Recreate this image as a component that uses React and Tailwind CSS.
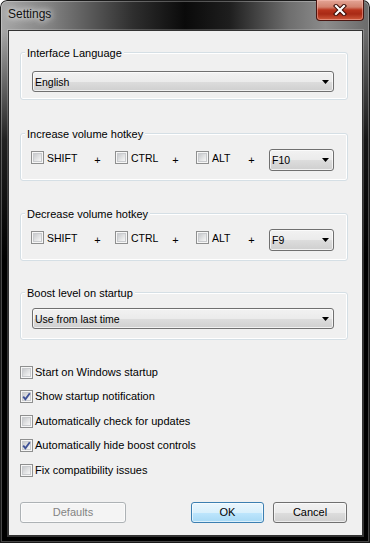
import React from "react";

function Checkbox({ checked }) {
  return (
    <div className="relative w-[13px] h-[13px] shrink-0 border border-[#8e8f8f] bg-[#f6f6f6] p-[1px]">
      <div className="w-full h-full border border-[#c9cbce] [background-image:linear-gradient(135deg,#c8cacd_0%,#e2e3e4_55%,#f6f6f6_100%)]" />
      {checked && (
        <svg className="absolute left-[1px] top-[1px]" width="9" height="9" viewBox="0 0 9 9">
          <path d="M1.2 4.6 L3.4 7.2 L7.8 1.2" fill="none" stroke="#3e5196" strokeWidth="1.9" strokeLinejoin="miter" />
        </svg>
      )}
    </div>
  );
}

function Arrow() {
  return (
    <svg width="7" height="4" viewBox="0 0 7 4" className="shrink-0">
      <path d="M0 0 H7 L3.5 4 Z" fill="#000" />
    </svg>
  );
}

function Combo({ text, className }) {
  return (
    <div
      className={`flex items-center justify-between pl-[2px] pr-[4px] border border-[#707070] rounded-[3px] shadow-[inset_0_0_0_1px_rgba(255,255,255,0.7)] [background-image:linear-gradient(180deg,#f2f2f2_0%,#ebebeb_50%,#dddddd_51%,#cfcfcf_100%)] ${className}`}
    >
      <span className="text-[10.5px] leading-[12px] text-black">{text}</span>
      <Arrow />
    </div>
  );
}

function Group({ label, className, children }) {
  return (
    <div
      className={`relative w-[328px] h-[48px] border border-[#d5dfe5] rounded-[3px] shadow-[inset_0_0_0_1px_#ffffff] ${className}`}
    >
      <span className="absolute left-[4px] top-[-7px] px-[2px] bg-[#f0f0f0] text-[11px] leading-[14px] text-black whitespace-nowrap">
        {label}
      </span>
      {children}
    </div>
  );
}

function KeyBox({ label, className }) {
  return (
    <div className={`flex items-center gap-[3px] h-[13px] mt-[2px] ${className}`}>
      <Checkbox />
      <span className="text-[10.5px] leading-[12px] text-black">{label}</span>
    </div>
  );
}

function Plus() {
  return (
    <div className="w-[13px] h-[22px] flex items-center justify-center text-[11px] text-black pt-[1px]">+</div>
  );
}

function HotkeyRow({ fkey }) {
  return (
    <div className="flex items-start pt-[15px] pl-[10px]">
      <KeyBox label="SHIFT" className="w-[60px]" />
      <Plus />
      <KeyBox label="CTRL" className="w-[54px] ml-[11px]" />
      <Plus />
      <KeyBox label="ALT" className="w-[49px] ml-[14px]" />
      <Plus />
      <Combo text={fkey} className="w-[65px] h-[22px] ml-[11px]" />
    </div>
  );
}

function Option({ label, checked, className }) {
  return (
    <div className={`flex items-center gap-[2px] h-[13px] ${className}`}>
      <Checkbox checked={checked} />
      <span className="text-[11px] leading-[13px] text-black whitespace-nowrap">{label}</span>
    </div>
  );
}

function Button({ children, variant, className }) {
  let style =
    "border-[#707070] text-black [background-image:linear-gradient(180deg,#f2f2f2_0%,#ebebeb_50%,#dddddd_51%,#cfcfcf_100%)]";
  if (variant === "default")
    style =
      "border-[#3c7fb1] text-black [background-image:linear-gradient(180deg,#eaf6fd_0%,#d9f0fc_50%,#bee6fd_51%,#a7d9f5_100%)]";
  if (variant === "disabled")
    style = "border-[#adb2b5] text-[#838383] bg-[#f4f4f4]";
  return (
    <div
      className={`h-[21px] flex items-center justify-center border rounded-[3px] shadow-[inset_0_0_0_1px_rgba(255,255,255,0.6)] text-[11px] ${style} ${className}`}
    >
      {children}
    </div>
  );
}

export default function App() {
  return (
    <div className="w-[370px] h-[543px] bg-white font-['Liberation_Sans',Arial,sans-serif]">
      <div className="w-full h-full rounded-t-[7px] flex flex-col shadow-[inset_0_0_0_1px_#1a1a1a,inset_0_0_0_2px_rgba(255,255,255,0.28)] [background-image:linear-gradient(180deg,rgba(0,0,0,0)_0px,rgba(0,0,0,0)_32px,rgba(0,0,0,0.8)_140px,#000_260px),linear-gradient(90deg,#a8a8a8_0%,#808080_14%,#2e2e2e_36%,#0a0a0a_50%,#1e1e1e_62%,#6e6e6e_78%,#8c8c8c_88%,#6a6a6a_100%)]">
        <div className="h-[30px] flex items-start pl-[8px] pr-[6px]">
          <span className="mt-[7px] text-[12px] leading-[14px] text-[#111] [text-shadow:0_0_6px_#ffffff,0_0_10px_rgba(255,255,255,0.8)]">
            Settings
          </span>
          <div className="ml-auto w-[48px] h-[21px] rounded-b-[4px] border border-t-0 border-[#4a1510] shadow-[inset_0_0_0_1px_rgba(255,200,190,0.45)] [background-image:linear-gradient(180deg,#e3a596_0%,#d3826f_35%,#b8341d_50%,#a92a15_70%,#cf5a3c_100%)] flex items-center justify-center">
            <svg width="14" height="12" viewBox="0 0 14 12">
              <path d="M3 2 L11 10 M11 2 L3 10" stroke="#3a0c06" strokeWidth="4.2" strokeLinecap="square" fill="none" />
              <path d="M3 2 L11 10 M11 2 L3 10" stroke="#ffffff" strokeWidth="2.2" strokeLinecap="square" fill="none" />
            </svg>
          </div>
        </div>
        <div className="ml-[8px] w-[355px] h-[506px] border border-[#333] shadow-[0_0_0_1px_rgba(255,255,255,0.2)] bg-[#f0f0f0] flex flex-col pl-[11px]">
          <Group label="Interface Language" className="mt-[21px]">
            <div className="pt-[18px] pl-[11px]">
              <Combo text="English" className="w-[302px] h-[21px]" />
            </div>
          </Group>
          <Group label="Increase volume hotkey" className="mt-[33px]">
            <HotkeyRow fkey="F10" />
          </Group>
          <Group label="Decrease volume hotkey" className="mt-[32px]">
            <HotkeyRow fkey="F9" />
          </Group>
          <Group label="Boost level on startup" className="mt-[31px]">
            <div className="pt-[15px] pl-[11px]">
              <Combo text="Use from last time" className="w-[302px] h-[21px]" />
            </div>
          </Group>
          <div className="flex flex-col mt-[26px]">
            <Option label="Start on Windows startup" />
            <Option label="Show startup notification" checked className="mt-[11px]" />
            <Option label="Automatically check for updates" className="mt-[12px]" />
            <Option label="Automatically hide boost controls" checked className="mt-[11px]" />
            <Option label="Fix compatibility issues" className="mt-[12px]" />
          </div>
          <div className="mt-auto mb-[12px] flex pr-[15px]">
            <Button variant="disabled" className="w-[106px]">Defaults</Button>
            <Button variant="default" className="w-[73px] ml-auto">OK</Button>
            <Button className="w-[74px] ml-[9px]">Cancel</Button>
          </div>
        </div>
      </div>
    </div>
  );
}
